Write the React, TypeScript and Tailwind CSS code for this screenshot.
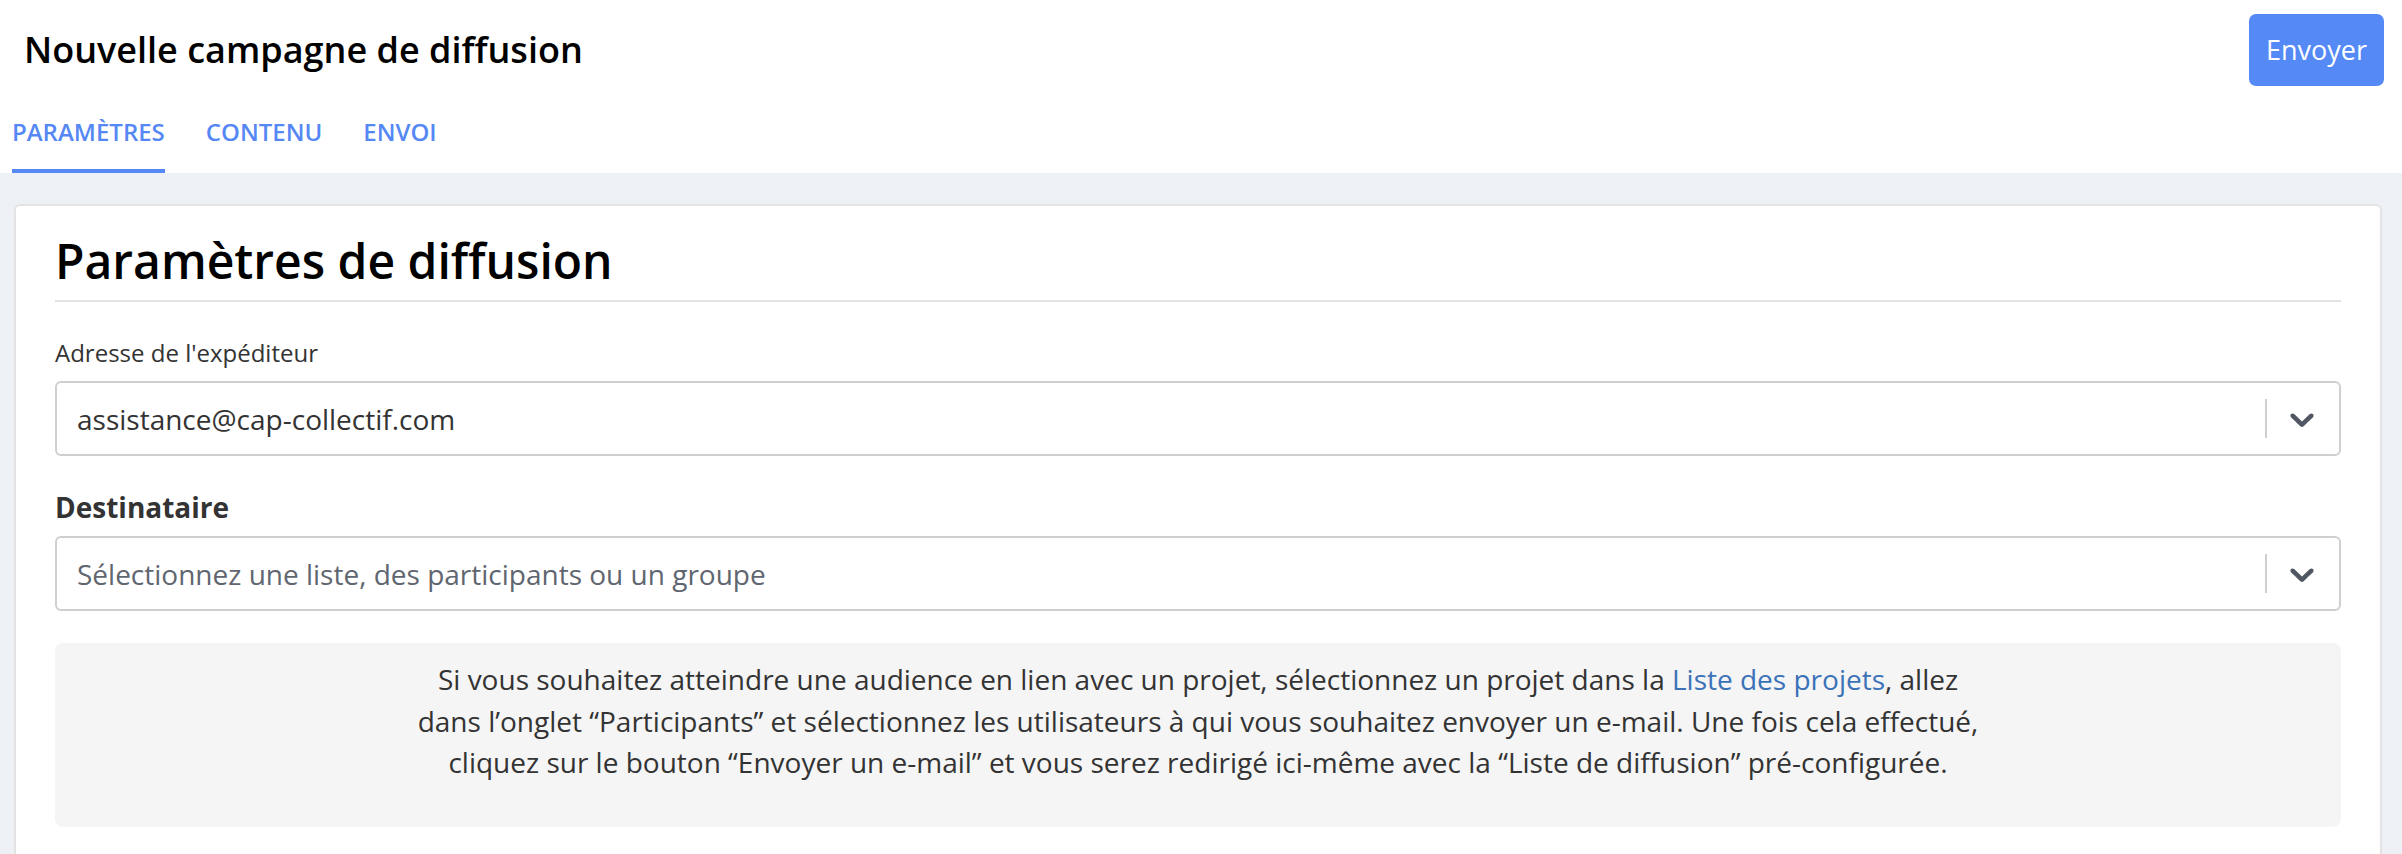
const Chevron = () => (
  <svg viewBox="0 0 20 20" width={40} height={40} className="fill-[#505762]">
    <path d="M4.516 7.548c0.436-0.446 1.043-0.481 1.576 0l3.908 3.747 3.908-3.747c0.533-0.481 1.141-0.446 1.574 0 0.436 0.445 0.408 1.197 0 1.615-0.406 0.418-4.695 4.502-4.695 4.502-0.217 0.223-0.502 0.335-0.787 0.335s-0.57-0.112-0.789-0.335c0 0-4.287-4.084-4.695-4.502s-0.436-1.17 0-1.615z" />
  </svg>
);

const Select = ({ value, placeholder }: { value?: string; placeholder?: string }) => (
  <div className="flex h-[75px] items-center rounded-[6px] border-2 border-[#cfcfcf] bg-white">
    <div className={`flex-1 pl-[20px] text-[28px] leading-[28px] ${value ? 'text-[#333333]' : 'text-[#5f6670]'}`}>
      {value ?? placeholder}
    </div>
    <div className="h-[39px] w-[2px] bg-[#cfcfcf]" />
    <div className="flex items-center pl-[15px] pr-[17px]">
      <Chevron />
    </div>
  </div>
);

const tabs = ['PARAMÈTRES', 'CONTENU', 'ENVOI'];

export default function App() {
  return (
    <div className="min-h-screen bg-[#edf0f5] font-['Open_Sans',sans-serif]">
      <div className="bg-white">
        <div className="flex items-center justify-between pl-[24px] pr-[18px] pt-[14px]">
          <h1 className="text-[36px] font-semibold leading-none text-black">Nouvelle campagne de diffusion</h1>
          <button className="h-[72px] rounded-[7px] bg-[#5489f6] px-[17px] text-[27px] text-white">Envoyer</button>
        </div>
        <div className="mt-[34px] flex gap-[41px] pl-[12px]">
          {tabs.map((t, i) => (
            <div
              key={t}
              className={`border-b-4 pb-[25px] text-[24px] font-semibold leading-[24px] text-[#5588f5] ${
                i === 0 ? 'border-[#5588f5]' : 'border-transparent'
              }`}
            >
              {t}
            </div>
          ))}
        </div>
      </div>

      <div className="ml-[14px] mr-[20px] pt-[31px]">
        <div className="rounded-[6px] border-2 border-[#e3e3e3] bg-white px-[39px] pb-[40px] pt-[31px]">
          <h2 className="border-b-2 border-[#e3e3e3] pb-[15px] text-[48px] font-semibold leading-[48px] text-black">
            Paramètres de diffusion
          </h2>

          <div className="mt-[39px] mb-[16px] text-[24px] leading-[24px] text-[#333333]">Adresse de l'expéditeur</div>
          <Select value="assistance@cap-collectif.com" />

          <div className="mt-[37px] mb-[15px] text-[28px] font-bold leading-[28px] text-[#333333]">Destinataire</div>
          <Select placeholder="Sélectionnez une liste, des participants ou un groupe" />

          <div className="mt-[32px] rounded-[8px] bg-[#f5f5f5] pb-[43px] pt-[16px] text-center text-[28px] leading-[41.5px] text-[#333333]">
            <p>
              Si vous souhaitez atteindre une audience en lien avec un projet, sélectionnez un projet dans la{' '}
              <a className="text-[#3b72b8]">Liste des projets</a>, allez
              <br />
              dans l’onglet “Participants” et sélectionnez les utilisateurs à qui vous souhaitez envoyer un e-mail. Une fois cela effectué,
              <br />
              cliquez sur le bouton “Envoyer un e-mail” et vous serez redirigé ici-même avec la “Liste de diffusion” pré-configurée.
            </p>
          </div>
        </div>
      </div>
    </div>
  );
}
